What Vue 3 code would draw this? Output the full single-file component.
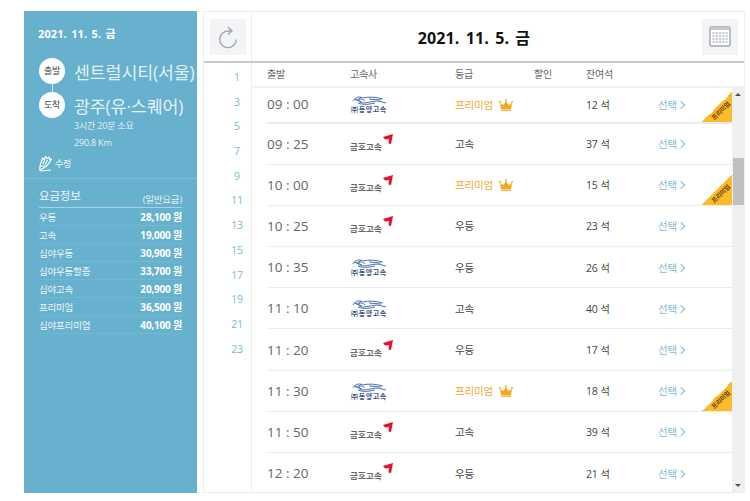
<template>
  <div class="page">
    <aside class="side">
      <div class="sideTop">
        <div class="sideDate">2021. 11. 5. 금</div>
        <div class="stop">
          <span class="stopBadge">출발</span>
          <span class="stopName">센트럴시티(서울)</span>
        </div>
        <div class="stopLine"></div>
        <div class="stop">
          <span class="stopBadge">도착</span>
          <span class="stopName">광주(유·스퀘어)</span>
        </div>
        <div class="tripInfo">3시간 20분 소요</div>
        <div class="tripInfo km">290.8 Km</div>
        <div class="edit">
          <svg width="13" height="17" viewBox="0 0 13 17" fill="none" stroke="#fff" stroke-width="1.1">
            <path d="M1 11 L3.5 3 L5 4.5 L6.5 1.5 L8 3.5 L10 2 L10.5 4.5 L12.5 4 L8 11 Z" />
            <path d="M4 9 L6 4 M6.5 9.5 L8.5 5" />
            <path d="M1 11 L0.8 15 L8 11 M1 16 L12 15" />
          </svg>
          <span>수정</span>
        </div>
      </div>
      <div class="fares">
        <div class="faresHead">
          <span class="faresTitle">요금정보</span>
          <span class="faresNote">(일반요금)</span>
        </div>
        <div v-for="fare in fares" :key="fare.name" class="fareRow">
          <span>{{ fare.name }}</span>
          <b>{{ fare.price }} 원</b>
        </div>
      </div>
    </aside>

    <main class="main">
      <header class="mainHead">
        <div class="headLeft">
          <button class="iconBtn">
            <svg width="22" height="24" viewBox="0 0 22 24" fill="none" stroke="#a3a7ae" stroke-width="1.4">
              <path d="M15 6 H11 A8.3 8.3 0 1 0 19.3 14.4" />
              <path d="M11 2 L15 6 L11 9.6" />
            </svg>
          </button>
        </div>
        <h1 class="mainTitle">2021. 11. 5. 금</h1>
        <button class="iconBtn calBtn">
          <svg width="22" height="21" viewBox="0 0 22 21">
            <rect x="1" y="1" width="20" height="19" rx="1" fill="#fff" stroke="#a3a7ae" stroke-width="1.4" />
            <rect x="1" y="1" width="20" height="3" fill="#c3c6cc" />
            <g fill="#c6c9cf">
              <template v-for="r in 4" :key="r">
                <rect v-for="c in 5" :key="c" :x="c * 3.3 + 0.2" :y="r * 3 + 3" width="2" height="2" />
              </template>
            </g>
          </svg>
        </button>
      </header>

      <div class="mainBody">
        <ul class="hours">
          <li v-for="h in hours" :key="h">{{ h }}</li>
        </ul>

        <div class="schedule">
          <div class="colHead">
            <span class="cTime">출발</span>
            <span class="cCompany">고속사</span>
            <span class="cGrade">등급</span>
            <span class="cSale">할인</span>
            <span class="cSeat">잔여석</span>
          </div>

          <div class="scrollWrap">
            <div class="rows">
              <div v-for="(row, i) in rows" :key="row.time" class="row" :class="{ firstRow: i === 0 }">
                <span class="cTime time">{{ row.time }}</span>
                <span class="cCompany">
                  <span v-if="row.company === 'dy'" class="dongyang">
                    <svg width="38" height="10" viewBox="0 0 38 10" fill="none" stroke="#4a6fb0" stroke-width="1">
                      <path d="M3 5 C5 1 10 0 13 2 C18 0.5 26 1 33 3 M11 1 C8 4 8 7 13 7 C17 7 23 5 28 5 L36 7" />
                      <path d="M6 4 C10 2 13 3 15 5 M8 7 C14 9.5 20 8 25 7 M19 3 L31 4 M4 3 L12 6" />
                    </svg>
                    <em>㈜동양고속</em>
                  </span>
                  <span v-else class="kumho">
                    금호고속
                    <svg class="kumhoArrow" width="10" height="10" viewBox="0 0 10 10">
                      <path d="M0 3 L10 0 L8 10 L5.5 9.5 L6 5 L2 5.5 Z" fill="#e8112d" />
                    </svg>
                  </span>
                </span>
                <span class="cGrade" :class="{ premium: row.grade === '프리미엄' }">
                  {{ row.grade }}
                  <svg v-if="row.grade === '프리미엄'" class="crown" width="14" height="12" viewBox="0 0 14 12">
                    <path d="M2 10 L1 4 L4.5 6 L7 2 L9.5 6 L13 4 L12 10 Z" fill="#f5a81c" />
                    <circle cx="1" cy="3" r="1" fill="#f5a81c" />
                    <circle cx="7" cy="1.2" r="1" fill="#f5a81c" />
                    <circle cx="13" cy="3" r="1" fill="#f5a81c" />
                    <rect x="2" y="10.5" width="10" height="1.3" fill="#f5a81c" />
                  </svg>
                </span>
                <span class="cSale"></span>
                <span class="cSeat seat">{{ row.seat }} 석</span>
                <span class="pick">선택 <i class="chev"></i></span>
                <span v-if="row.grade === '프리미엄'" class="ribbon"><small>프리미엄</small></span>
              </div>
            </div>

            <div class="scrollbar">
              <span class="arrowUp"></span>
              <span class="thumb"></span>
              <span class="arrowDown"></span>
            </div>
          </div>
        </div>
      </div>
    </main>
  </div>
</template>

<script setup>
const fares = [
  { name: '우등', price: '28,100' },
  { name: '고속', price: '19,000' },
  { name: '심야우등', price: '30,900' },
  { name: '심야우등할증', price: '33,700' },
  { name: '심야고속', price: '20,900' },
  { name: '프리미엄', price: '36,500' },
  { name: '심야프리미엄', price: '40,100' }
]

const hours = [1, 3, 5, 7, 9, 11, 13, 15, 17, 19, 21, 23]

const rows = [
  { time: '09 : 00', company: 'dy', grade: '프리미엄', seat: 12 },
  { time: '09 : 25', company: 'kh', grade: '고속', seat: 37 },
  { time: '10 : 00', company: 'kh', grade: '프리미엄', seat: 15 },
  { time: '10 : 25', company: 'kh', grade: '우등', seat: 23 },
  { time: '10 : 35', company: 'dy', grade: '우등', seat: 26 },
  { time: '11 : 10', company: 'dy', grade: '고속', seat: 40 },
  { time: '11 : 20', company: 'kh', grade: '우등', seat: 17 },
  { time: '11 : 30', company: 'dy', grade: '프리미엄', seat: 18 },
  { time: '11 : 50', company: 'kh', grade: '고속', seat: 39 },
  { time: '12 : 20', company: 'kh', grade: '우등', seat: 21 }
]
</script>

<style>
html, body {
  margin: 0;
  background: #fff;
  overflow: hidden;
}
</style>

<style scoped>
.page {
  display: flex;
  gap: 6px;
  width: 750px;
  height: 501px;
  box-sizing: border-box;
  padding: 11px 5px 8px 24px;
  font-family: "Open Sans", "Noto Sans CJK KR", sans-serif;
  color: #444;
  letter-spacing: -0.2px;
}

/* left panel */
.side {
  width: 173px;
  background: #67b1ce;
  color: #fff;
  flex-shrink: 0;
}
.sideTop {
  height: 168px;
  box-sizing: border-box;
  padding: 15px 0 0 14px;
  border-bottom: 1px solid #7dbdd6;
}
.sideDate {
  font-size: 11px;
  font-weight: 700;
  line-height: 16px;
  margin-bottom: 16px;
  letter-spacing: 0.1px;
  word-spacing: 1.4px;
}
.stop {
  display: flex;
  align-items: center;
  gap: 10px;
  height: 26px;
  margin-left: 1px;
  white-space: nowrap;
}
.stopBadge {
  width: 26px;
  height: 26px;
  border-radius: 50%;
  background: #fff;
  color: #444;
  font-size: 9px;
  text-align: center;
  line-height: 26px;
  flex-shrink: 0;
}
.stopName {
  font-size: 17.3px;
  color: #e3f0f5;
  letter-spacing: -0.1px;
  margin-left: -1px;
}
.stopLine {
  width: 1px;
  height: 8px;
  margin-left: 14px;
  background: #d8ebf2;
}
.tripInfo {
  margin-left: 36px;
  font-size: 9px;
  line-height: 13px;
  color: #e3f0f5;
  margin-top: 1px;
}
.km {
  margin-top: 4px;
}
.edit {
  display: flex;
  align-items: center;
  gap: 3px;
  margin-top: 6px;
  margin-left: 1px;
  font-size: 9px;
}
.fares {
  padding: 8px 15px 0 15px;
}
.faresHead {
  display: flex;
  justify-content: space-between;
  align-items: flex-end;
  height: 20px;
  border-bottom: 1px solid #a6d2e2;
}
.faresTitle {
  font-size: 11.5px;
  color: #eef7fa;
  line-height: 16px;
  padding-bottom: 3px;
}
.faresNote {
  font-size: 9.5px;
  color: #e3f0f5;
  padding-bottom: 1px;
}
.fareRow {
  display: flex;
  justify-content: space-between;
  align-items: center;
  height: 18px;
  box-sizing: border-box;
  border-bottom: 1px solid #72b8d3;
  font-size: 9.5px;
  color: #eef7fa;
}
.fareRow b {
  font-size: 10px;
  font-weight: 700;
  color: #fff;
}

/* right panel */
.main {
  flex: 1;
  display: flex;
  flex-direction: column;
  border: 1px solid #ececec;
  background: #fff;
  min-width: 0;
}
.mainHead {
  display: flex;
  align-items: center;
  height: 49px;
  border-bottom: 2px solid #c8c8c8;
  flex-shrink: 0;
}
.headLeft {
  width: 48px;
  height: 100%;
  box-sizing: border-box;
  display: flex;
  align-items: center;
  justify-content: center;
  border-right: 1px solid #ececec;
  flex-shrink: 0;
}
.iconBtn {
  width: 36px;
  height: 36px;
  border: 0;
  padding: 0;
  background: #f3f4f6;
  display: flex;
  align-items: center;
  justify-content: center;
  flex-shrink: 0;
}
.calBtn {
  margin-right: 6px;
}
.mainTitle {
  flex: 1;
  margin: 0;
  padding-right: 6px;
  text-align: center;
  font-size: 16px;
  font-weight: 700;
  color: #111;
  letter-spacing: 0.1px;
  word-spacing: 2px;
}
.mainBody {
  flex: 1;
  display: flex;
  min-height: 0;
}
.hours {
  list-style: none;
  margin: 0;
  padding: 2px 0 0;
  width: 48px;
  box-sizing: border-box;
  border-right: 1px solid #ececec;
  flex-shrink: 0;
}
.hours li {
  height: 24.7px;
  line-height: 24.7px;
  text-align: center;
  padding-left: 18px;
  box-sizing: border-box;
  width: 48px;
  font-size: 10.5px;
  color: #79b9d6;
}
.schedule {
  flex: 1;
  display: flex;
  flex-direction: column;
  min-width: 0;
  min-height: 0;
}
.colHead {
  display: flex;
  align-items: center;
  height: 25px;
  box-sizing: border-box;
  padding-bottom: 2px;
  flex-shrink: 0;
  border-bottom: 2px solid #f2f2f2;
  font-size: 10px;
  color: #666;
  padding-left: 15px;
}
.cTime { width: 83px; flex-shrink: 0; }
.cCompany { width: 105px; flex-shrink: 0; }
.cGrade { width: 79px; flex-shrink: 0; }
.cSale { width: 52px; flex-shrink: 0; }
.cSeat { width: 72px; flex-shrink: 0; }

.scrollWrap {
  flex: 1;
  display: flex;
  min-height: 0;
}
.rows {
  flex: 1;
  overflow: hidden;
  min-width: 0;
}
.row {
  position: relative;
  display: flex;
  align-items: center;
  height: 41.2px;
  margin-left: 15px;
  box-sizing: border-box;
  border-bottom: 1px solid #ececec;
  font-size: 10.5px;
  color: #444;
}
.firstRow {
  height: 35.5px;
  border-bottom-width: 2px;
  padding-bottom: 1px;
}
.time {
  font-size: 13.5px;
  color: #666;
  letter-spacing: 0;
}
.seat {
  font-size: 10.5px;
}
.premium {
  color: #f3a73a;
}
.crown {
  vertical-align: -2px;
  margin-left: 4px;
}
.pick {
  color: #7fb9d3;
  font-size: 10.5px;
  white-space: nowrap;
}
.chev {
  display: inline-block;
  width: 5px;
  height: 5px;
  border-top: 1px solid #7fb9d3;
  border-right: 1px solid #7fb9d3;
  transform: rotate(45deg);
  margin-left: -1px;
  vertical-align: 1px;
}
.ribbon {
  position: absolute;
  right: 0;
  bottom: 0;
  width: 30px;
  height: 30px;
  background: linear-gradient(135deg, transparent 50%, #fdbb2b 50%);
}
.ribbon small {
  position: absolute;
  left: 6px;
  top: 15px;
  width: 26px;
  font-size: 6.5px;
  line-height: 8px;
  text-align: center;
  white-space: nowrap;
  color: #5b470f;
  font-weight: 700;
  letter-spacing: -0.3px;
  transform: rotate(-45deg);
}
.dongyang {
  display: inline-flex;
  flex-direction: column;
  align-items: center;
  width: 38px;
}
.dongyang svg {
  display: block;
}
.dongyang em {
  font-style: normal;
  font-size: 7px;
  line-height: 7px;
  font-weight: 700;
  color: #33507f;
  letter-spacing: 0.6px;
  white-space: nowrap;
}
.kumho {
  position: relative;
  display: inline-block;
  top: 2px;
  font-size: 8.5px;
  font-weight: 700;
  color: #666;
  letter-spacing: 0.2px;
}
.kumhoArrow {
  position: absolute;
  right: -11px;
  top: -6px;
}

/* scrollbar */
.scrollbar {
  position: relative;
  width: 12px;
  flex-shrink: 0;
  background: #f0f0f0;
  display: flex;
  flex-direction: column;
  align-items: center;
}
.arrowUp {
  margin-top: 5px;
  border-left: 3px solid transparent;
  border-right: 3px solid transparent;
  border-bottom: 3px solid #505050;
}
.thumb {
  width: 11px;
  height: 47px;
  margin-top: 62px;
  background: #c0c0c0;
}
.arrowDown {
  margin-top: auto;
  margin-bottom: 5px;
  border-left: 3px solid transparent;
  border-right: 3px solid transparent;
  border-top: 3px solid #505050;
}
</style>
